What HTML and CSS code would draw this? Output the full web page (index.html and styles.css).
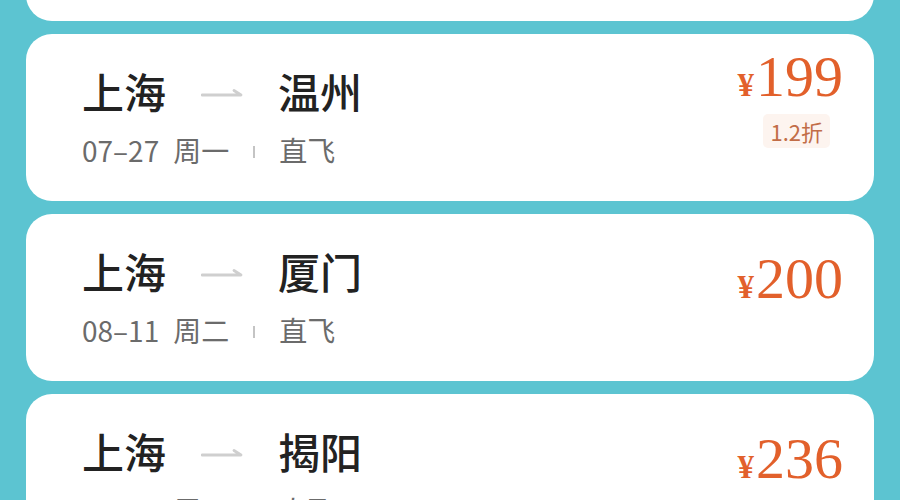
FILE: index.html
```html
<!DOCTYPE html>
<html lang="zh-CN">
<head>
    <meta charset="UTF-8">
    <meta name="viewport" content="width=device-width, initial-scale=1.0">
    <title>低价机票</title>
    <link rel="stylesheet" href="styles.css">
</head>
<body>

    <div class="flight-list">
        <div class="flight-card">
            <div class="route-info">
                <div class="route">
                    <span class="city">上海</span>
                    <svg class="arrow" width="42" height="10" viewBox="0 0 42 10"><path d="M1 8 H40 L33 3.5" /></svg>
                    <span class="city">成都</span>
                </div>
                <div class="meta">
                    <span class="date">07–20</span>
                    <span class="week">周一</span>
                    <span class="sep"></span>
                    <span>直飞</span>
                </div>
            </div>
            <div class="price-box">
                <div class="price"><span class="yen">¥</span>180</div>
            </div>
        </div>

        <div class="flight-card">
            <div class="route-info">
                <div class="route">
                    <span class="city">上海</span>
                    <svg class="arrow" width="42" height="10" viewBox="0 0 42 10"><path d="M1 8 H40 L33 3.5" /></svg>
                    <span class="city">温州</span>
                </div>
                <div class="meta">
                    <span class="date">07–27</span>
                    <span class="week">周一</span>
                    <span class="sep"></span>
                    <span>直飞</span>
                </div>
            </div>
            <div class="price-box">
                <div class="price"><span class="yen">¥</span>199</div>
                <div class="discount">1.2折</div>
            </div>
        </div>

        <div class="flight-card">
            <div class="route-info">
                <div class="route">
                    <span class="city">上海</span>
                    <svg class="arrow" width="42" height="10" viewBox="0 0 42 10"><path d="M1 8 H40 L33 3.5" /></svg>
                    <span class="city">厦门</span>
                </div>
                <div class="meta">
                    <span class="date">08–11</span>
                    <span class="week">周二</span>
                    <span class="sep"></span>
                    <span>直飞</span>
                </div>
            </div>
            <div class="price-box">
                <div class="price"><span class="yen">¥</span>200</div>
            </div>
        </div>

        <div class="flight-card">
            <div class="route-info">
                <div class="route">
                    <span class="city">上海</span>
                    <svg class="arrow" width="42" height="10" viewBox="0 0 42 10"><path d="M1 8 H40 L33 3.5" /></svg>
                    <span class="city">揭阳</span>
                </div>
                <div class="meta">
                    <span class="date">08–19</span>
                    <span class="week">周三</span>
                    <span class="sep"></span>
                    <span>直飞</span>
                </div>
            </div>
            <div class="price-box">
                <div class="price"><span class="yen">¥</span>236</div>
            </div>
        </div>
    </div>

</body>
</html>
```

FILE: styles.css
```css
* {
    box-sizing: border-box;
}

body {
    margin: 0;
    height: 100vh;
    overflow: hidden;
    background-color: #5cc4d1;
    font-family: "Noto Sans CJK SC", "Noto Sans", sans-serif;
}

/* list is scrolled, first card only shows its bottom edge */
.flight-list {
    display: flex;
    flex-direction: column;
    gap: 13px;
    padding: 0 26px;
    margin-top: -146px;
}

.flight-card {
    height: 167px;
    background-color: #fff;
    border-radius: 26px;
    padding: 0 31px 0 56px;
    display: flex;
    justify-content: space-between;
}

.route-info {
    padding-top: 32px;
}

.route {
    display: flex;
    align-items: center;
    gap: 35px;
    height: 50px;
}

.city {
    font-size: 42px;
    line-height: 50px;
    font-weight: 500;
    color: #222;
}

.arrow {
    margin-top: 2px;
}

.arrow path {
    fill: none;
    stroke: #cfcfcf;
    stroke-width: 2.8;
    stroke-linecap: round;
    stroke-linejoin: round;
}

.meta {
    margin-top: 16px;
    display: flex;
    align-items: center;
    gap: 24px;
    font-size: 28px;
    line-height: 36px;
    color: #6b6b6b;
}

.meta .week {
    margin-left: -10px;
}

.meta .sep {
    width: 2px;
    height: 12px;
    margin-top: 4px;
    background-color: #c4c4c4;
}

.price-box {
    display: flex;
    flex-direction: column;
    justify-content: center;
    align-items: flex-end;
    padding-bottom: 29px;
}

.price {
    font-family: "Liberation Serif", serif;
    font-size: 58px;
    line-height: 58px;
    color: #e2602b;
}

.yen {
    font-size: 33px;
    font-weight: bold;
    margin-right: 2px;
}

.discount {
    margin-right: 13px;
    margin-bottom: 11px;
    height: 34px;
    padding: 0 7px;
    border-radius: 5px;
    background-color: #fdf4ef;
    color: #c26d47;
    font-size: 22px;
    line-height: 34px;
}
```
